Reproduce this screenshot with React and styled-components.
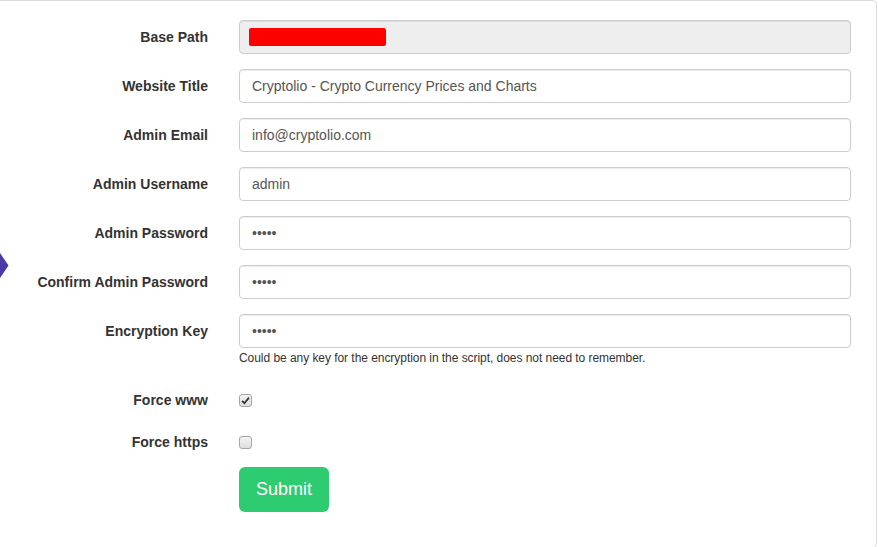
import React from "react"
import styled, { createGlobalStyle } from "styled-components"

const GlobalStyle = createGlobalStyle`
  html, body {
    margin: 0;
    padding: 0;
    background: #fff;
  }
  body {
    font-family: "Liberation Sans", Arial, Helvetica, sans-serif;
    font-size: 14px;
    line-height: 1.42857;
    color: #333;
  }
  * { box-sizing: border-box; }
`

const Page = styled.div`
  position: relative;
  width: 878px;
  height: 547px;
  overflow: hidden;
`

const Panel = styled.div`
  width: 877px;
  height: 548px;
  background: #fff;
  border: 1px solid #dcdcdc;
  border-left: none;
  border-radius: 0 5px 5px 0;
  padding-top: 19px;
`

const SideArrow = styled.svg`
  position: absolute;
  left: 0;
  top: 253px;
`

const FormGroup = styled.div`
  display: grid;
  grid-template-columns: 208px 612px;
  column-gap: 31px;
  margin-bottom: ${(p) => (p.$tight ? "16px" : "15px")};
  min-height: ${(p) => (p.$check ? "27px" : "auto")};
`

const Label = styled.label`
  padding-top: 7px;
  font-weight: 700;
  line-height: 20px;
  text-align: right;
  color: #333;
`

const Field = styled.div`
  display: flex;
  flex-direction: column;
`

const Input = styled.input`
  display: block;
  width: 100%;
  height: 34px;
  padding: 6px 12px;
  font-family: inherit;
  font-size: 14px;
  line-height: 20px;
  color: #555;
  background: ${(p) => (p.readOnly ? "#eee" : "#fff")};
  border: 1px solid #ccc;
  border-radius: 4px;
  box-shadow: inset 0 1px 1px rgba(0, 0, 0, 0.075);
  outline: none;
`

const MaskedBox = styled.div`
  display: flex;
  align-items: center;
  height: 34px;
  padding: 0 9px;
  background: #eee;
  border: 1px solid #ccc;
  border-radius: 4px;
  box-shadow: inset 0 1px 1px rgba(0, 0, 0, 0.075);
`

const RedBar = styled.span`
  display: block;
  width: 137px;
  height: 18px;
  background: #ff0000;
  border-radius: 2px;
`

const HelpText = styled.span`
  display: block;
  margin-top: 2px;
  font-size: 12px;
  line-height: 17px;
  letter-spacing: -0.05px;
  color: #333;
`

const CheckWrap = styled.div`
  padding-top: 11px;
`

const Check = styled.span`
  display: flex;
  align-items: center;
  justify-content: center;
  width: 13px;
  height: 13px;
  border: 1px solid #a6a6a6;
  border-radius: 3px;
  background: linear-gradient(#f4f4f4, #dedede);
`

const SubmitButton = styled.button`
  grid-column: 2;
  justify-self: start;
  height: 45px;
  padding: 0 17px;
  font-family: inherit;
  font-size: 18px;
  color: #fff;
  background: #2ecc71;
  border: none;
  border-radius: 6px;
`

const fields = [
  { label: "Website Title", value: "Cryptolio - Crypto Currency Prices and Charts" },
  { label: "Admin Email", value: "info@cryptolio.com" },
  { label: "Admin Username", value: "admin" },
  { label: "Admin Password", value: "admin", type: "password" },
  { label: "Confirm Admin Password", value: "admin", type: "password" },
]

const CheckBox = ({ checked }) => (
  <Check>
    {checked && (
      <svg width="9" height="9" viewBox="0 0 9 9">
        <path d="M1 4.8 L3.4 7.2 L8 1.6" fill="none" stroke="#333" strokeWidth="1.8" />
      </svg>
    )}
  </Check>
)

export default function App() {
  return (
    <Page>
      <GlobalStyle />
      <SideArrow width="9" height="25" viewBox="0 0 9 25">
        <polygon points="0,0 8.5,12.5 0,25" fill="#4a3aa8" />
      </SideArrow>
      <Panel>
        <FormGroup>
          <Label>Base Path</Label>
          <MaskedBox>
            <RedBar />
          </MaskedBox>
        </FormGroup>
        {fields.map((f) => (
          <FormGroup key={f.label}>
            <Label>{f.label}</Label>
            <Input type={f.type || "text"} defaultValue={f.value} />
          </FormGroup>
        ))}
        <FormGroup $tight>
          <Label>Encryption Key</Label>
          <Field>
            <Input type="password" defaultValue="admin" />
            <HelpText>Could be any key for the encryption in the script, does not need to remember.</HelpText>
          </Field>
        </FormGroup>
        <FormGroup $check>
          <Label>Force www</Label>
          <CheckWrap>
            <CheckBox checked />
          </CheckWrap>
        </FormGroup>
        <FormGroup $check>
          <Label>Force https</Label>
          <CheckWrap>
            <CheckBox />
          </CheckWrap>
        </FormGroup>
        <FormGroup>
          <SubmitButton type="button">Submit</SubmitButton>
        </FormGroup>
      </Panel>
    </Page>
  )
}
